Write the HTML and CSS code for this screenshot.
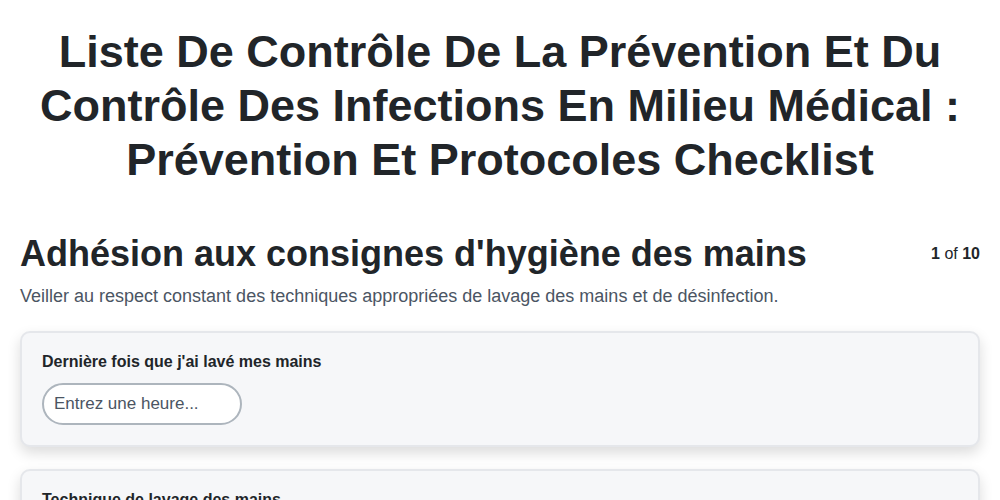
FILE: index.html
```html
<!DOCTYPE html>
<html lang="fr">
<head>
<meta charset="utf-8">
<link rel="stylesheet" href="styles.css">
</head>
<body>
<h1 class="title">Liste De Contrôle De La Prévention Et Du Contrôle Des Infections En Milieu Médical : Prévention Et Protocoles Checklist</h1>
<main class="section">
  <div class="section-head">
    <h2 class="section-title">Adhésion aux consignes d'hygiène des mains</h2>
    <div class="counter"><b>1</b> of <b>10</b></div>
  </div>
  <p class="section-desc">Veiller au respect constant des techniques appropriées de lavage des mains et de désinfection.</p>
  <div class="card">
    <label class="card-label">Dernière fois que j'ai lavé mes mains</label>
    <input class="time-input" type="text" placeholder="Entrez une heure...">
  </div>
  <div class="card">
    <label class="card-label">Technique de lavage des mains</label>
    <input class="time-input" type="text" placeholder="Entrez une heure...">
  </div>
</main>
</body>
</html>
```

FILE: styles.css
```css
* { box-sizing: border-box; }
body {
  margin: 0;
  font-family: "Liberation Sans", Arial, sans-serif;
  color: #212529;
  background: #fff;
}
.title {
  margin: 25px 20px 0;
  font-size: 45px;
  line-height: 54px;
  font-weight: 700;
  text-align: center;
}
.section {
  padding: 45px 20px 0;
}
.section-head {
  display: flex;
  justify-content: space-between;
  align-items: center;
}
.section-title {
  margin: 0;
  font-size: 36px;
  line-height: 44px;
  font-weight: 700;
}
.counter {
  font-size: 16px;
}
.section-desc {
  margin: 10px 0 24px;
  font-size: 18px;
  line-height: 21px;
  color: #4b5563;
}
.card {
  background: #f6f7f9;
  border: 2px solid #e5e7eb;
  border-radius: 10px;
  box-shadow: 0 6px 14px rgba(0,0,0,0.14);
  padding: 20px;
  margin-bottom: 22px;
  display: flex;
  flex-direction: column;
  align-items: flex-start;
}
.card-label {
  font-size: 16px;
  line-height: 18px;
  font-weight: 700;
  margin-bottom: 12px;
}
.time-input {
  width: 200px;
  height: 42px;
  border: 2px solid #adb5bd;
  border-radius: 21px;
  padding: 0 10px;
  font-family: inherit;
  font-size: 17px;
  color: #212529;
  background: #fff;
  outline: none;
}
.time-input::placeholder { color: #4b5563; }
```
